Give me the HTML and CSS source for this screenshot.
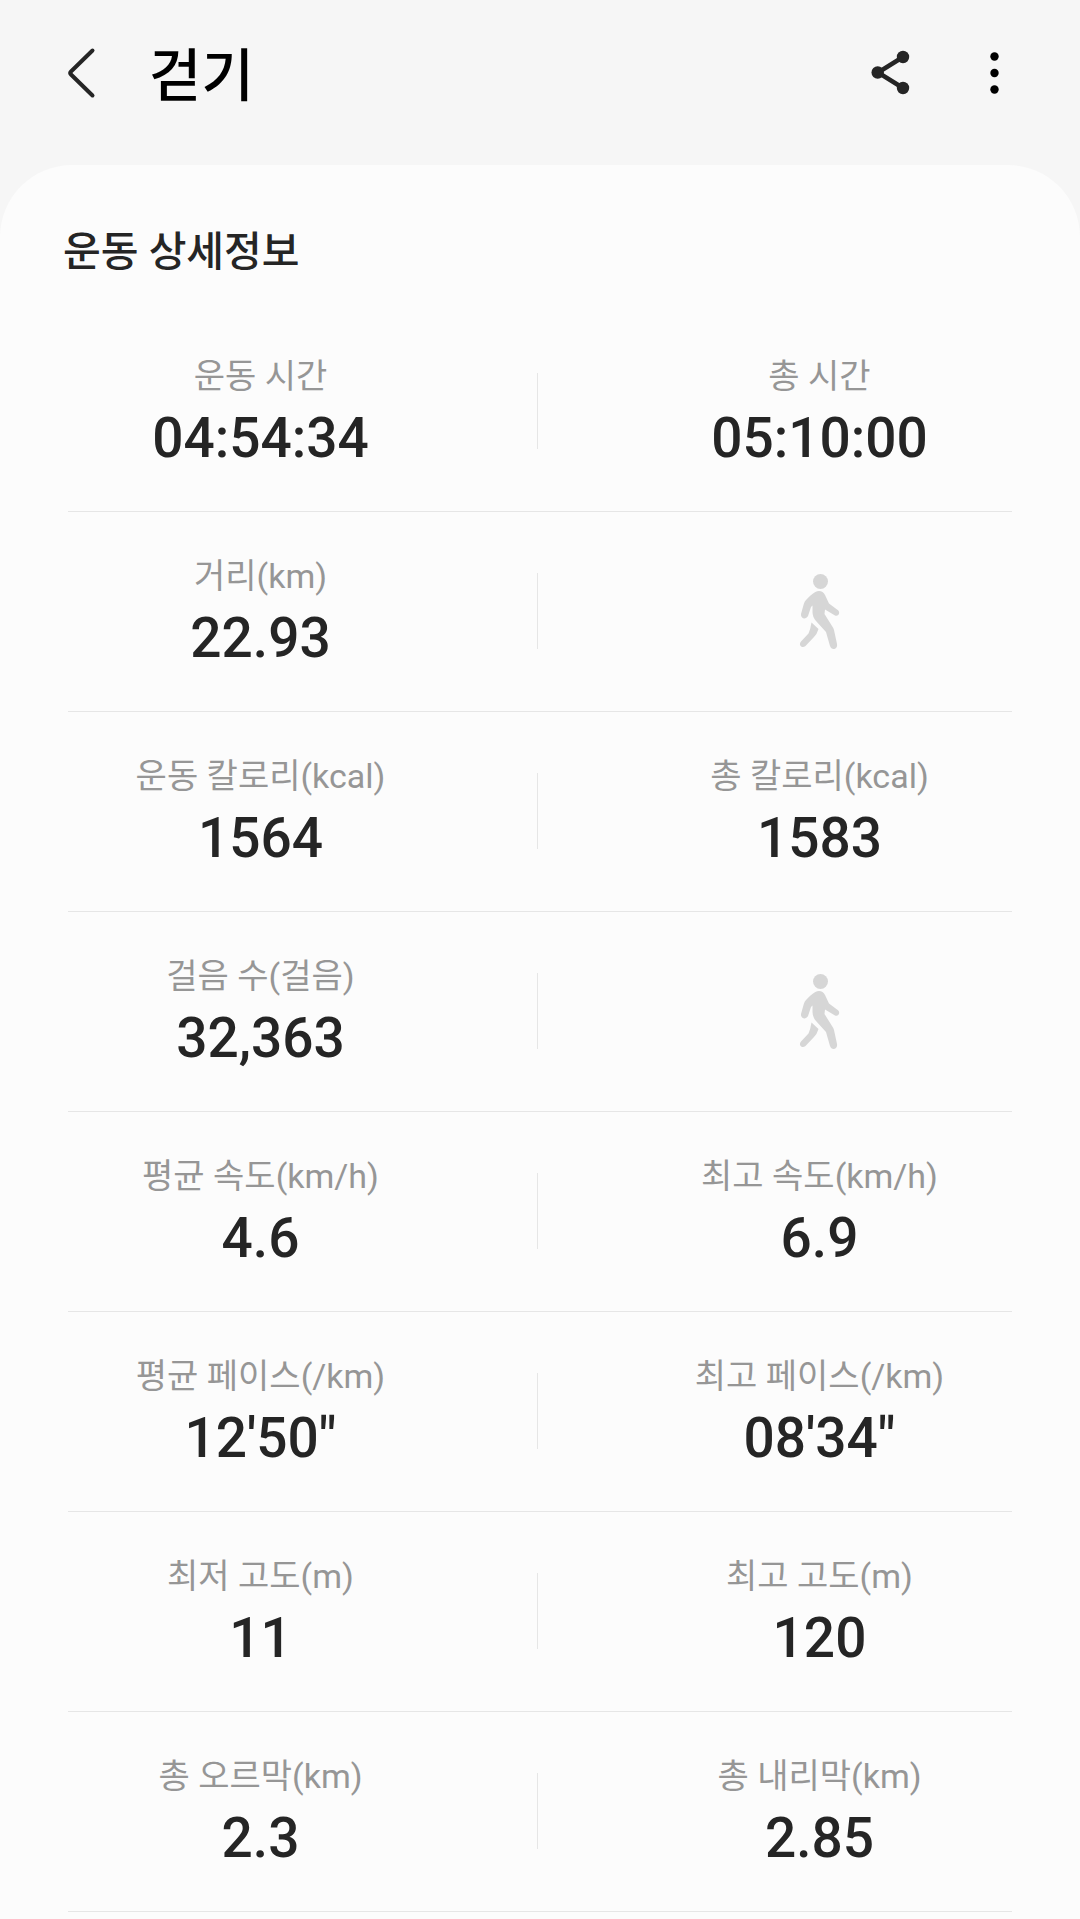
FILE: index.html
```html
<!DOCTYPE html>
<html lang="ko">
<head>
<meta charset="utf-8">
<meta name="viewport" content="width=device-width, initial-scale=1">
<title>걷기</title>
<link rel="stylesheet" href="styles.css">
</head>
<body>
<header class="app-bar">
  <button class="icon-button" type="button" aria-label="뒤로">
    <svg width="48" height="60" viewBox="0 0 48 60" fill="none" stroke="#252525" stroke-width="4" stroke-linecap="round" stroke-linejoin="round"><path d="M34.500 8.500 13 29.500Q11.500 31 13 32.500L34.500 53.500"/></svg>
  </button>
  <h1 class="app-title">걷기</h1>
  <button class="icon-button" type="button" aria-label="공유">
    <svg width="48" height="60" viewBox="0 0 48 60" fill="#252525"><path d="M37 15 12 30.500 37 46" fill="none" stroke="#252525" stroke-width="4.500"/><circle cx="37" cy="15" r="6.200"/><circle cx="11.700" cy="30.500" r="6.200"/><circle cx="37" cy="46" r="6.200"/></svg>
  </button>
  <button class="icon-button more" type="button" aria-label="더보기">
    <svg width="48" height="60" viewBox="0 0 48 60" fill="#000"><circle cx="24.500" cy="14.500" r="4.200"/><circle cx="24.500" cy="31" r="4.200"/><circle cx="24.500" cy="47.500" r="4.200"/></svg>
  </button>
</header>

<svg class="symbols" aria-hidden="true">
  <symbol id="walker" viewBox="0 0 120 120">
    <circle cx="60.500" cy="31.500" r="7.500"/>
    <path d="M59 41C54 41.500 50 46 46 50Q44.500 51.500 43.800 54L41 64C40.500 69 46 70 48 66L51 57 52.500 55.500 52.500 62Q52.500 67 56 71L66 82 70 96C71.500 101 78 99.500 77 94L74 80Q73.500 78 72 76L64.500 64 65 59.500 75 65.500C79 67 81 61.500 77 59.500L69 53.500 65 45Q63 41 59 41Z"/>
    <path d="M51.500 72.500 58.500 79Q57 84 54 87L45.500 96C42 99 38 95 41 91.500L48.500 83.500Q50.500 79 51.500 72.500Z"/>
  </symbol>
</svg>

<main class="card">
  <h2 class="card-title">운동 상세정보</h2>
  <div class="stats">
    <div class="row">
      <dl class="stat"><dt>운동 시간</dt><dd>04:54:34</dd></dl>
      <span class="divider"></span>
      <dl class="stat"><dt>총 시간</dt><dd>05:10:00</dd></dl>
    </div>
    <div class="row">
      <dl class="stat"><dt>거리(km)</dt><dd>22.93</dd></dl>
      <span class="divider"></span>
      <svg class="walker" aria-hidden="true"><use href="#walker"/></svg>
    </div>
    <div class="row">
      <dl class="stat"><dt>운동 칼로리(kcal)</dt><dd>1564</dd></dl>
      <span class="divider"></span>
      <dl class="stat"><dt>총 칼로리(kcal)</dt><dd>1583</dd></dl>
    </div>
    <div class="row">
      <dl class="stat"><dt>걸음 수(걸음)</dt><dd>32,363</dd></dl>
      <span class="divider"></span>
      <svg class="walker" aria-hidden="true"><use href="#walker"/></svg>
    </div>
    <div class="row">
      <dl class="stat"><dt>평균 속도(km/h)</dt><dd>4.6</dd></dl>
      <span class="divider"></span>
      <dl class="stat"><dt>최고 속도(km/h)</dt><dd>6.9</dd></dl>
    </div>
    <div class="row">
      <dl class="stat"><dt>평균 페이스(/km)</dt><dd>12'50"</dd></dl>
      <span class="divider"></span>
      <dl class="stat"><dt>최고 페이스(/km)</dt><dd>08'34"</dd></dl>
    </div>
    <div class="row">
      <dl class="stat"><dt>최저 고도(m)</dt><dd>11</dd></dl>
      <span class="divider"></span>
      <dl class="stat"><dt>최고 고도(m)</dt><dd>120</dd></dl>
    </div>
    <div class="row">
      <dl class="stat"><dt>총 오르막(km)</dt><dd>2.3</dd></dl>
      <span class="divider"></span>
      <dl class="stat"><dt>총 내리막(km)</dt><dd>2.85</dd></dl>
    </div>
  </div>
</main>
</body>
</html>
```

FILE: styles.css
```css
* {
  box-sizing: border-box;
  margin: 0;
  padding: 0;
}

body {
  background: #f6f6f6;
  color: #252525;
  font-family: Roboto, "Noto Sans CJK KR", sans-serif;
}

.app-bar {
  display: flex;
  align-items: flex-start;
  height: 165px;
  padding: 42px 62px 0 58px;
}

.icon-button {
  display: flex;
  border: 0;
  background: none;
  cursor: pointer;
}

.more {
  margin-left: 56px;
}

.app-title {
  flex: 1;
  margin-left: 43px;
  color: #000;
  font-size: 57px;
  font-weight: 500;
  line-height: 70px;
}

.symbols {
  display: none;
}

.card {
  min-height: calc(100vh - 165px);
  padding: 62px 68px 0;
  border-radius: 72px 72px 0 0;
  background: #fcfcfc;
}

.card-title {
  margin-left: -5px;
  font-size: 41px;
  font-weight: 500;
  line-height: 50px;
}

.stats {
  margin-top: 35px;
}

.row {
  display: grid;
  grid-template-columns: 1fr 174px 1fr;
  height: 200px;
  border-bottom: 1px solid #e6e6e6;
}

.stat {
  padding-top: 44px;
  text-align: center;
  white-space: nowrap;
}

.stat dt {
  color: #969696;
  font-size: 34px;
  line-height: 40px;
}

.stat dd {
  margin-top: 12px;
  font-size: 55px;
  font-weight: 500;
  line-height: 60px;
}

.divider {
  width: 1px;
  height: 76px;
  margin: 61px 0 0 84px;
  background: #e6e6e6;
}

.walker {
  width: 120px;
  height: 120px;
  margin-top: 38px;
  justify-self: center;
  fill: #d6d6d6;
}
```
